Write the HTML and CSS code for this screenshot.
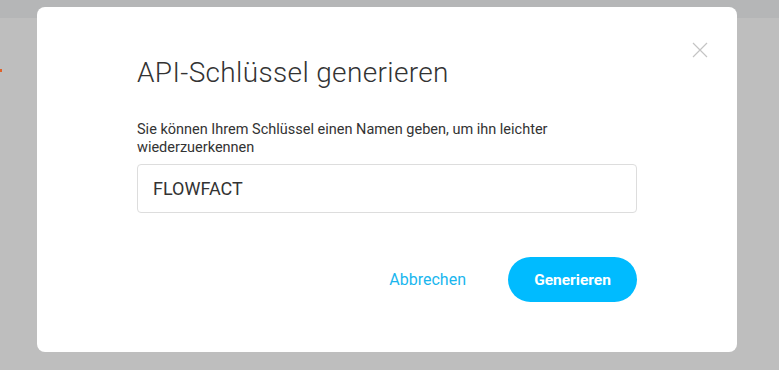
FILE: index.html
```html
<!DOCTYPE html>
<html lang="de">
<head>
  <meta charset="UTF-8" />
  <title>API-Schlüssel generieren</title>
  <link rel="stylesheet" href="styles.css">
</head>
<body>
  <div class="topbar"></div>
  <div class="page-mark"></div>

  <div class="modal">
    <button class="close-btn" aria-label="Schließen">
      <svg width="16" height="16" viewBox="0 0 16 16">
        <path d="M1 1 L15 15 M15 1 L1 15" stroke="#c4c4c4" stroke-width="1.2" fill="none"/>
      </svg>
    </button>

    <h2>API-Schlüssel generieren</h2>

    <label for="keyname">Sie können Ihrem Schlüssel einen Namen geben, um ihn leichter wiederzuerkennen</label>
    <input type="text" id="keyname" value="FLOWFACT" />

    <div class="actions">
      <button class="link-btn">Abbrechen</button>
      <button class="primary-btn">Generieren</button>
    </div>
  </div>
</body>
</html>
```

FILE: styles.css
```css
body {
  font-family: Roboto, 'Noto Sans', sans-serif;
  background: #bebebe;
  margin: 0;
  height: 370px;
  overflow: hidden;
}
.topbar {
  height: 18px;
  background: #b5b6b7;
}
.page-mark {
  width: 2px;
  height: 3px;
  margin-top: 51px;
  background: #e0622a;
}
.modal {
  position: absolute;
  top: 7px;
  left: 37px;
  width: 700px;
  height: 345px;
  box-sizing: border-box;
  padding: 50px 100px 0;
  background: #fff;
  border-radius: 8px;
}
.close-btn {
  position: absolute;
  top: 35px;
  right: 29px;
  padding: 0;
  border: none;
  background: none;
  cursor: pointer;
  line-height: 0;
}
.modal h2 {
  margin: 0 0 32px;
  font-size: 28px;
  line-height: 32px;
  font-weight: 300;
  letter-spacing: 0.35px;
  color: #333;
}
.modal label {
  display: block;
  font-size: 14.5px;
  line-height: 18px;
  color: #333;
  margin-bottom: 7px;
}
.modal input {
  display: block;
  width: 100%;
  height: 49px;
  box-sizing: border-box;
  padding: 0 15px;
  border: 1px solid #ddd;
  border-radius: 4px;
  font-family: inherit;
  font-size: 18px;
  color: #333;
  outline: none;
}
.actions {
  display: flex;
  justify-content: flex-end;
  align-items: center;
  gap: 42px;
  margin-top: 44px;
}
.link-btn {
  border: none;
  background: none;
  padding: 0;
  font-family: inherit;
  font-size: 16px;
  color: #1ab6ee;
  cursor: pointer;
}
.primary-btn {
  width: 129px;
  height: 45px;
  border: none;
  border-radius: 23px;
  background: #00bbff;
  color: #fff;
  font-family: inherit;
  font-size: 15.5px;
  font-weight: 700;
  cursor: pointer;
}
```
